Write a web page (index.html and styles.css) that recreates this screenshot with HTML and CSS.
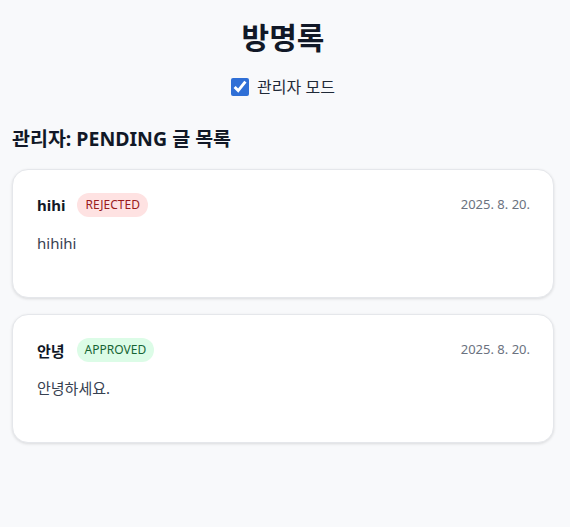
FILE: index.html
```html
<!DOCTYPE html>
<html lang="ko">
<head>
<meta charset="utf-8">
<link rel="stylesheet" href="styles.css">
</head>
<body>
<div class="page">
  <h1 class="title">방명록</h1>
  <label class="admin-toggle">
    <input type="checkbox" checked>
    <span>관리자 모드</span>
  </label>
  <h2 class="section-title">관리자: PENDING 글 목록</h2>
  <div class="list">
    <div class="card">
      <div class="card-head">
        <div class="who">
          <span class="name">hihi</span>
          <span class="badge rejected">REJECTED</span>
        </div>
        <span class="date">2025. 8. 20.</span>
      </div>
      <p class="content">hihihi</p>
    </div>
    <div class="card">
      <div class="card-head">
        <div class="who">
          <span class="name">안녕</span>
          <span class="badge approved">APPROVED</span>
        </div>
        <span class="date">2025. 8. 20.</span>
      </div>
      <p class="content">안녕하세요.</p>
    </div>
  </div>
</div>
</body>
</html>
```

FILE: styles.css
```css
html, body {
  margin: 0;
  background: #f8f9fb;
}
body {
  font-family: "Noto Sans", "Noto Sans CJK KR", sans-serif;
  color: #111827;
}
.page {
  padding: 15px 16px 20px 12px;
}
.title {
  margin: 0;
  text-align: center;
  font-size: 30px;
  font-weight: 700;
  line-height: 46px;
  color: #111827;
}
.admin-toggle {
  display: flex;
  justify-content: center;
  align-items: center;
  gap: 8px;
  margin-top: 15px;
  font-size: 16px;
  line-height: 22px;
  color: #1f2937;
}
.admin-toggle input {
  width: 18px;
  height: 18px;
  margin: 0;
  accent-color: #2f6fd6;
}
.section-title {
  margin: 27px 0 16px;
  font-size: 19.5px;
  font-weight: 700;
  line-height: 28px;
  color: #111827;
}
.list {
  display: flex;
  flex-direction: column;
  gap: 16px;
}
.card {
  background: #fff;
  border: 1px solid #e5e7eb;
  border-radius: 16px;
  box-shadow: 0 1px 3px rgba(0,0,0,0.12);
  padding: 23px 23px 42px 24px;
}
.card-head {
  display: flex;
  justify-content: space-between;
  align-items: flex-start;
}
.who {
  display: flex;
  align-items: center;
  gap: 12px;
}
.name {
  font-size: 15px;
  font-weight: 700;
  color: #111827;
}
.badge {
  font-size: 12px;
  line-height: 24px;
  padding: 0 8px;
  border-radius: 999px;
}
.rejected {
  background: #fee2e2;
  color: #991b1b;
}
.approved {
  background: #dcfce7;
  color: #166534;
}
.date {
  font-size: 13px;
  color: #6b7280;
  line-height: 22px;
}
.content {
  margin: 14px 0 0;
  font-size: 15px;
  line-height: 24px;
  color: #374151;
}
```
